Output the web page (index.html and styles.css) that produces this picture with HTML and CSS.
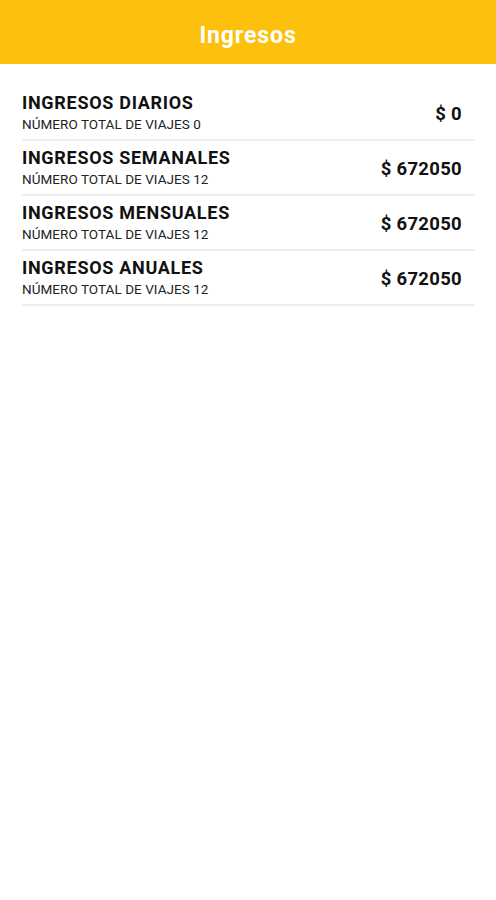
FILE: index.html
```html
<!DOCTYPE html>
<html lang="es">

<head>
    <meta charset="UTF-8">
    <meta name="viewport" content="width=device-width, initial-scale=1.0">
    <title>Ingresos</title>
    <link rel="stylesheet" href="styles.css">
</head>

<body>

    <!-- Toolbar -->
    <header class="toolbar">
        <h1>Ingresos</h1>
    </header>

    <!-- Earnings list -->
    <div class="list">
        <div class="row">
            <div class="info">
                <div class="title">INGRESOS DIARIOS</div>
                <div class="subtitle">NÚMERO TOTAL DE VIAJES 0</div>
            </div>
            <div class="amount">$ 0</div>
        </div>
        <div class="row">
            <div class="info">
                <div class="title">INGRESOS SEMANALES</div>
                <div class="subtitle">NÚMERO TOTAL DE VIAJES 12</div>
            </div>
            <div class="amount">$ 672050</div>
        </div>
        <div class="row">
            <div class="info">
                <div class="title">INGRESOS MENSUALES</div>
                <div class="subtitle">NÚMERO TOTAL DE VIAJES 12</div>
            </div>
            <div class="amount">$ 672050</div>
        </div>
        <div class="row">
            <div class="info">
                <div class="title">INGRESOS ANUALES</div>
                <div class="subtitle">NÚMERO TOTAL DE VIAJES 12</div>
            </div>
            <div class="amount">$ 672050</div>
        </div>
    </div>

</body>

</html>
```

FILE: styles.css
```css
/* Global Reset */
* {
    margin: 0;
    padding: 0;
    box-sizing: border-box;
}

/* Body */
body {
    font-family: Roboto, 'Liberation Sans', sans-serif;
    background-color: #fff;
    color: #111;
}

/* Toolbar */
.toolbar {
    background-color: #fdc10d;
    height: 64px;
    display: flex;
    justify-content: center;
    align-items: center;
}

.toolbar h1 {
    color: #fff;
    font-size: 23px;
    font-weight: bold;
    letter-spacing: 0.9px;
    padding-top: 7px;
}

/* List */
.list {
    padding: 22px 21px 0 22px;
}

.row {
    display: flex;
    justify-content: space-between;
    align-items: center;
    height: 55px;
    border-bottom: 2px solid #eee;
    padding-right: 13px;
}

.info {
    padding-top: 1px;
}

.title {
    font-size: 18px;
    font-weight: bold;
    line-height: 20px;
    letter-spacing: 0.7px;
    color: #111;
}

.subtitle {
    font-size: 13.5px;
    line-height: 18px;
    letter-spacing: 0.05px;
    color: #222;
    margin-top: 2px;
}

.amount {
    font-size: 18.5px;
    font-weight: bold;
    letter-spacing: 0.3px;
    color: #111;
    padding-top: 2px;
}
```
